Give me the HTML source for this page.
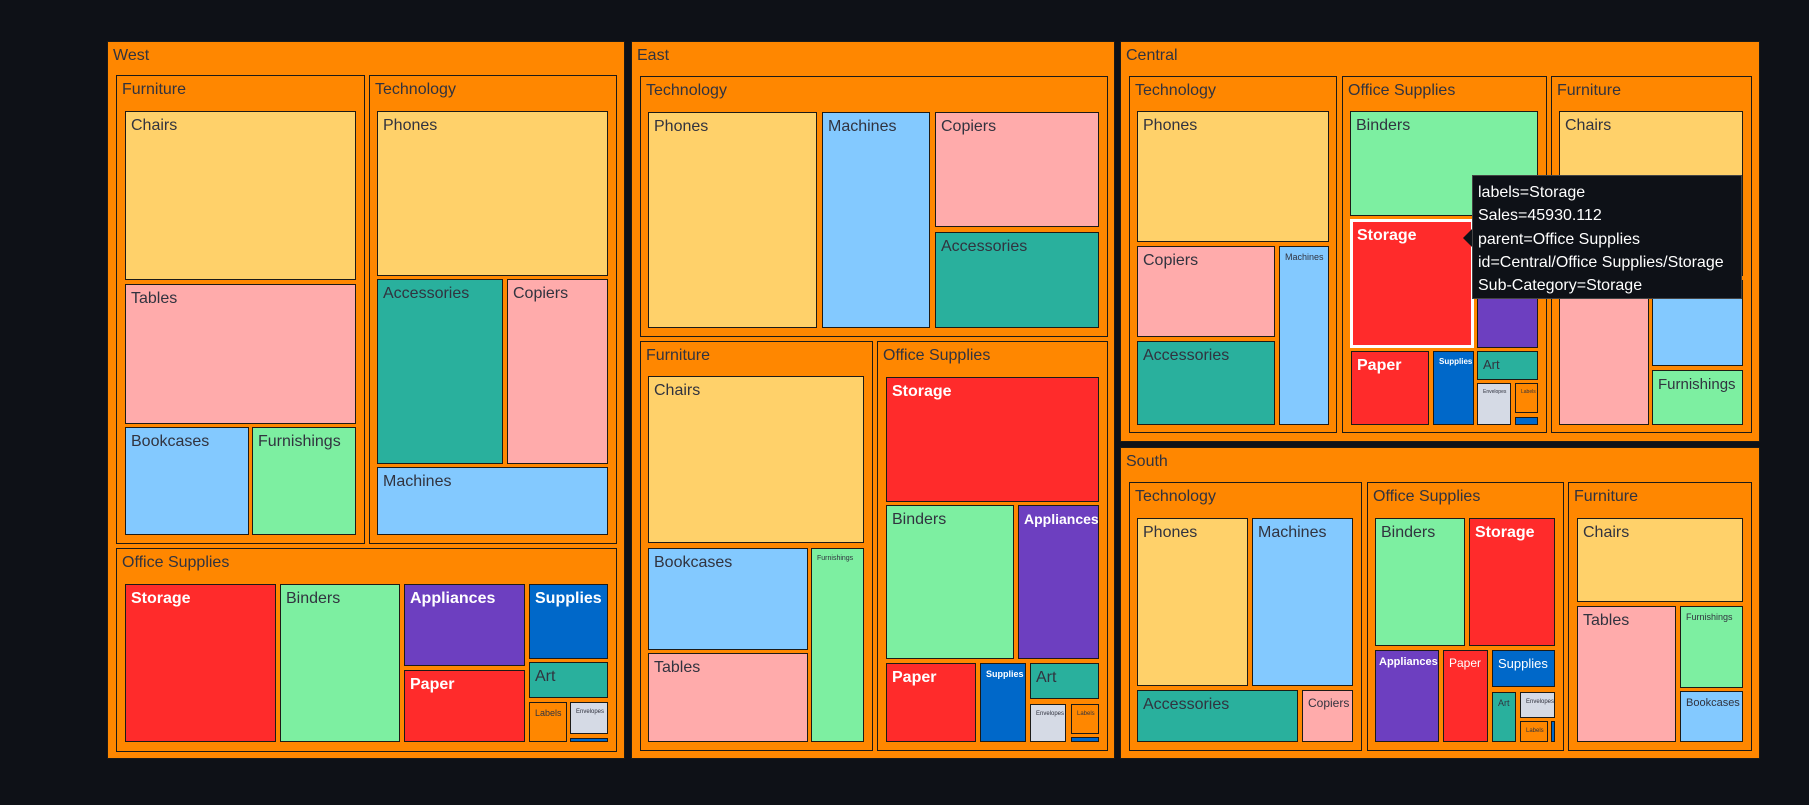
<!DOCTYPE html>
<html><head><meta charset="utf-8"><style>
html,body{margin:0;padding:0;background:#0e1117;width:1809px;height:805px;overflow:hidden}
.b{position:absolute;box-sizing:border-box;border:1.5px solid #1c1a17;font-family:"Liberation Sans",sans-serif;color:#31333f;font-size:16px;line-height:1;padding:6px 0 0 5px;white-space:nowrap;overflow:hidden}
.o{background:#ff8700}
.y{background:#ffd16a}.p{background:#ffabab}.t{background:#29b09d}.l{background:#83c9ff}.g{background:#7defa1}
.r{background:#ff2b2b;color:#fff;font-weight:bold}.u{background:#6d3fc0;color:#fff;font-weight:bold}.d{background:#0068c9;color:#fff;font-weight:bold}.e{background:#d5dae5}
.s1{font-size:11px}.s2{font-size:9px}.s3{font-size:6px}
#tip{position:absolute;left:1472px;top:175px;width:270px;height:124px;box-sizing:border-box;background:#0e1117;border:1px solid #444;color:#fff;font-family:"Liberation Sans",sans-serif;font-size:16px;line-height:23.3px;padding:5px 0 0 5px;white-space:nowrap}
#arr{position:absolute;left:1463px;top:229px;width:0;height:0;border-top:9px solid transparent;border-bottom:9px solid transparent;border-right:9px solid #0e1117}
</style></head><body>
<!-- WEST -->
<div class="b o" style="left:107px;top:41px;width:518px;height:718px">West</div>
<div class="b o" style="left:116px;top:75px;width:249px;height:469px">Furniture</div>
<div class="b y" style="left:125px;top:111px;width:231px;height:169px">Chairs</div>
<div class="b p" style="left:125px;top:284px;width:231px;height:140px">Tables</div>
<div class="b l" style="left:125px;top:427px;width:124px;height:108px">Bookcases</div>
<div class="b g" style="left:252px;top:427px;width:104px;height:108px">Furnishings</div>
<div class="b o" style="left:369px;top:75px;width:248px;height:469px">Technology</div>
<div class="b y" style="left:377px;top:111px;width:231px;height:165px">Phones</div>
<div class="b t" style="left:377px;top:279px;width:126px;height:185px">Accessories</div>
<div class="b p" style="left:507px;top:279px;width:101px;height:185px">Copiers</div>
<div class="b l" style="left:377px;top:467px;width:231px;height:68px">Machines</div>
<div class="b o" style="left:116px;top:548px;width:501px;height:204px">Office Supplies</div>
<div class="b r" style="left:125px;top:584px;width:151px;height:158px">Storage</div>
<div class="b g" style="left:280px;top:584px;width:120px;height:158px">Binders</div>
<div class="b u" style="left:404px;top:584px;width:121px;height:82px">Appliances</div>
<div class="b r" style="left:404px;top:670px;width:121px;height:72px">Paper</div>
<div class="b d" style="left:529px;top:584px;width:79px;height:75px">Supplies</div>
<div class="b t" style="left:529px;top:662px;width:79px;height:36px">Art</div>
<div class="b o s2" style="left:529px;top:702px;width:38px;height:40px">Labels</div>
<div class="b e s3" style="left:570px;top:702px;width:38px;height:32px">Envelopes</div>
<div class="b d" style="left:570px;top:738px;width:38px;height:4px;padding:0"></div>
<!-- EAST -->
<div class="b o" style="left:631px;top:41px;width:484px;height:718px">East</div>
<div class="b o" style="left:640px;top:76px;width:468px;height:261px">Technology</div>
<div class="b y" style="left:648px;top:112px;width:169px;height:216px">Phones</div>
<div class="b l" style="left:822px;top:112px;width:108px;height:216px">Machines</div>
<div class="b p" style="left:935px;top:112px;width:164px;height:115px">Copiers</div>
<div class="b t" style="left:935px;top:232px;width:164px;height:96px">Accessories</div>
<div class="b o" style="left:640px;top:341px;width:233px;height:410px">Furniture</div>
<div class="b y" style="left:648px;top:376px;width:216px;height:167px">Chairs</div>
<div class="b l" style="left:648px;top:548px;width:160px;height:102px">Bookcases</div>
<div class="b p" style="left:648px;top:653px;width:160px;height:89px">Tables</div>
<div class="b g s3" style="left:811px;top:548px;width:53px;height:194px;font-size:7px">Furnishings</div>
<div class="b o" style="left:877px;top:341px;width:231px;height:410px">Office Supplies</div>
<div class="b r" style="left:886px;top:377px;width:213px;height:125px">Storage</div>
<div class="b g" style="left:886px;top:505px;width:128px;height:154px">Binders</div>
<div class="b u" style="left:1018px;top:505px;width:81px;height:154px;font-size:14px">Appliances</div>
<div class="b r" style="left:886px;top:663px;width:90px;height:79px">Paper</div>
<div class="b d s2" style="left:980px;top:663px;width:46px;height:79px">Supplies</div>
<div class="b t" style="left:1030px;top:663px;width:69px;height:36px">Art</div>
<div class="b e s3" style="left:1030px;top:704px;width:36px;height:38px">Envelopes</div>
<div class="b o s3" style="left:1071px;top:704px;width:28px;height:30px">Labels</div>
<div class="b d" style="left:1071px;top:737px;width:28px;height:5px;padding:0"></div>
<!-- CENTRAL -->
<div class="b o" style="left:1120px;top:41px;width:640px;height:401px">Central</div>
<div class="b o" style="left:1129px;top:76px;width:208px;height:357px">Technology</div>
<div class="b y" style="left:1137px;top:111px;width:192px;height:131px">Phones</div>
<div class="b p" style="left:1137px;top:246px;width:138px;height:91px">Copiers</div>
<div class="b t" style="left:1137px;top:341px;width:138px;height:84px">Accessories</div>
<div class="b l s2" style="left:1279px;top:246px;width:50px;height:179px">Machines</div>
<div class="b o" style="left:1342px;top:76px;width:205px;height:357px">Office Supplies</div>
<div class="b g" style="left:1350px;top:111px;width:188px;height:105px">Binders</div>
<div class="b u" style="left:1477px;top:219px;width:61px;height:129px"></div>
<div class="b r" style="left:1350px;top:219px;width:124px;height:129px;border:3px solid #fff;padding:6px 0 0 4px">Storage</div>
<div class="b r" style="left:1351px;top:351px;width:78px;height:74px">Paper</div>
<div class="b d s2" style="left:1433px;top:351px;width:41px;height:74px;font-size:8px">Supplies</div>
<div class="b t" style="left:1477px;top:351px;width:61px;height:29px;font-size:13px">Art</div>
<div class="b e s3" style="left:1477px;top:383px;width:34px;height:42px;font-size:5px">Envelopes</div>
<div class="b o s3" style="left:1515px;top:383px;width:23px;height:30px;font-size:5px">Labels</div>
<div class="b d" style="left:1515px;top:417px;width:23px;height:8px;padding:0"></div>
<div class="b o" style="left:1551px;top:76px;width:201px;height:357px">Furniture</div>
<div class="b y" style="left:1559px;top:111px;width:184px;height:165px">Chairs</div>
<div class="b p" style="left:1559px;top:280px;width:90px;height:145px"></div>
<div class="b l" style="left:1652px;top:280px;width:91px;height:86px"></div>
<div class="b g" style="left:1652px;top:370px;width:91px;height:55px;font-size:15px">Furnishings</div>
<!-- SOUTH -->
<div class="b o" style="left:1120px;top:447px;width:640px;height:312px">South</div>
<div class="b o" style="left:1129px;top:482px;width:233px;height:269px">Technology</div>
<div class="b y" style="left:1137px;top:518px;width:111px;height:168px">Phones</div>
<div class="b l" style="left:1252px;top:518px;width:101px;height:168px">Machines</div>
<div class="b t" style="left:1137px;top:690px;width:161px;height:52px">Accessories</div>
<div class="b p" style="left:1302px;top:690px;width:51px;height:52px;font-size:12px">Copiers</div>
<div class="b o" style="left:1367px;top:482px;width:197px;height:269px">Office Supplies</div>
<div class="b g" style="left:1375px;top:518px;width:90px;height:128px">Binders</div>
<div class="b r" style="left:1469px;top:518px;width:86px;height:128px">Storage</div>
<div class="b u s1" style="left:1375px;top:650px;width:64px;height:92px;padding:6px 0 0 3px">Appliances</div>
<div class="b r" style="left:1443px;top:650px;width:45px;height:92px;font-size:12px;font-weight:normal">Paper</div>
<div class="b d" style="left:1492px;top:650px;width:63px;height:37px;font-size:13px;font-weight:normal">Supplies</div>
<div class="b t s2" style="left:1492px;top:692px;width:24px;height:50px">Art</div>
<div class="b e s3" style="left:1520px;top:692px;width:35px;height:26px">Envelopes</div>
<div class="b o s3" style="left:1520px;top:721px;width:28px;height:21px">Labels</div>
<div class="b d" style="left:1551px;top:721px;width:4px;height:21px;padding:0"></div>
<div class="b o" style="left:1568px;top:482px;width:184px;height:269px">Furniture</div>
<div class="b y" style="left:1577px;top:518px;width:166px;height:84px">Chairs</div>
<div class="b p" style="left:1577px;top:606px;width:99px;height:136px">Tables</div>
<div class="b g s2" style="left:1680px;top:606px;width:63px;height:82px">Furnishings</div>
<div class="b l s1" style="left:1680px;top:691px;width:63px;height:51px">Bookcases</div>
<!-- tooltip -->
<div id="arr"></div>
<div id="tip">labels=Storage<br>Sales=45930.112<br>parent=Office Supplies<br>id=Central/Office Supplies/Storage<br>Sub-Category=Storage</div>
</body></html>
